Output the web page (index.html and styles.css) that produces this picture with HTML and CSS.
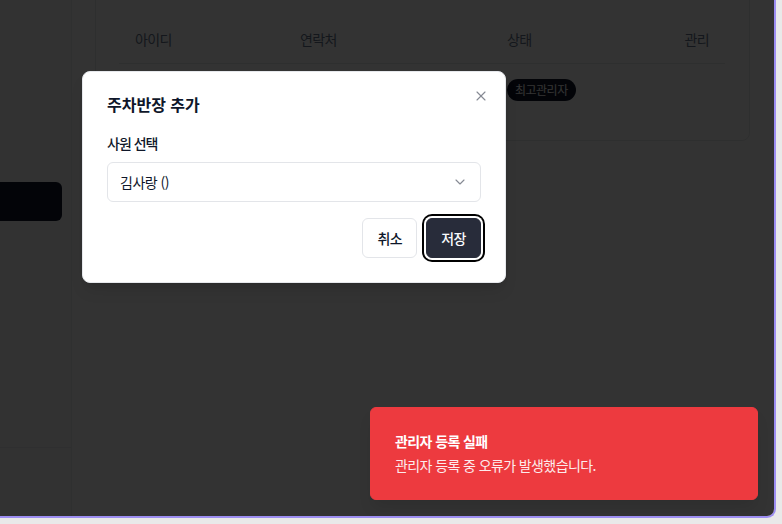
FILE: index.html
```html
<!DOCTYPE html>
<html lang="ko">
<head>
<meta charset="utf-8">
<title>주차반장 추가</title>
<link rel="stylesheet" href="styles.css">
</head>
<body>
<div class="app">
  <aside class="sidebar">
    <nav class="nav">
      <div class="nav-item active"></div>
    </nav>
    <div class="sidebar-footer"></div>
  </aside>
  <main class="main">
    <section class="card">
      <div class="table">
        <div class="row head">
          <span class="cell">아이디</span>
          <span class="cell">연락처</span>
          <span class="cell">상태</span>
          <span class="cell right">관리</span>
        </div>
        <div class="row body">
          <span class="cell"></span>
          <span class="cell"></span>
          <span class="cell"><span class="badge">최고관리자</span></span>
          <span class="cell right"></span>
        </div>
      </div>
    </section>
  </main>

  <div class="overlay"></div>

  <div class="dialog">
    <button class="close" aria-label="닫기">
      <svg width="16" height="16" viewBox="0 0 24 24" fill="none" stroke="currentColor" stroke-width="1.7" stroke-linecap="round" stroke-linejoin="round"><path d="M18 6 6 18"/><path d="m6 6 12 12"/></svg>
    </button>
    <h2 class="dialog-title">주차반장 추가</h2>
    <div class="field">
      <label class="label">사원 선택</label>
      <div class="select">
        <span class="select-value">김사랑 ()</span>
        <svg class="chevron" width="16" height="16" viewBox="0 0 24 24" fill="none" stroke="currentColor" stroke-width="1.7" stroke-linecap="round" stroke-linejoin="round"><path d="m6 9 6 6 6-6"/></svg>
      </div>
    </div>
    <div class="actions">
      <button class="btn outline">취소</button>
      <button class="btn primary">저장</button>
    </div>
  </div>

  <div class="toast">
    <div class="toast-title">관리자 등록 실패</div>
    <div class="toast-desc">관리자 등록 중 오류가 발생했습니다.</div>
  </div>
</div>
</body>
</html>
```

FILE: styles.css
```css
* { box-sizing: border-box; }

html, body {
  margin: 0;
  padding: 0;
}

body {
  background: #e9e9e9;
  font-family: "Noto Sans CJK KR", "Noto Sans", sans-serif;
  color: #0f172a;
  width: 782px;
  height: 524px;
  overflow: hidden;
}

.app {
  position: relative;
  width: 776px;
  height: 518px;
  display: flex;
  background: #ffffff;
  border-right: 2px solid #9d8ef2;
  border-bottom: 2px solid #9d8ef2;
  border-bottom-right-radius: 9px;
  overflow: hidden;
}

/* sidebar */
.sidebar {
  width: 72px;
  flex: none;
  display: flex;
  flex-direction: column;
  background: #fbfbfb;
  border-right: 1px solid #eceef1;
}

.nav {
  flex: 1;
  padding: 182px 9px 0 0;
}

.nav-item {
  height: 39px;
  margin-left: -12px;
  border-radius: 6px;
}

.nav-item.active {
  background: #0f172a;
}

.sidebar-footer {
  height: 69px;
  border-top: 1px solid #e8eaee;
}

/* main */
.main {
  flex: 1;
  padding: 0 24px 0 23px;
}

.card {
  margin-top: -10px;
  border: 1px solid #e6e8ec;
  border-radius: 8px;
  padding: 24px 24px 24px 23px;
}

.row {
  display: grid;
  grid-template-columns: 165px 207px 1fr 120px;
  align-items: center;
}

.row.head {
  height: 49px;
  border-bottom: 1px solid #e6e8ec;
  color: #64748b;
}

.row.body {
  height: 52px;
}

.cell {
  padding: 0 16px;
  font-size: 14px;
  letter-spacing: -0.6px;
  line-height: 20px;
}

.cell.right {
  text-align: right;
}

.badge {
  display: inline-block;
  background: #0f172a;
  color: #ffffff;
  font-size: 12px;
  letter-spacing: -0.5px;
  line-height: 22px;
  height: 22px;
  padding: 0 8px 0 8px;
  border-radius: 999px;
}

/* overlay */
.overlay {
  position: absolute;
  inset: 0;
  background: rgba(0, 0, 0, 0.8);
  z-index: 10;
}

/* dialog */
.dialog {
  position: absolute;
  left: 82px;
  top: 71px;
  width: 424px;
  z-index: 20;
  background: #ffffff;
  border: 1px solid #e6e8ec;
  border-radius: 8px;
  padding: 23px 24px 24px;
  box-shadow: 0 10px 15px -3px rgba(0,0,0,0.1), 0 4px 6px -4px rgba(0,0,0,0.1);
}

.close {
  position: absolute;
  right: 16px;
  top: 16px;
  width: 16px;
  height: 16px;
  padding: 0;
  border: 0;
  background: none;
  color: #0f172a;
  opacity: 0.5;
  display: flex;
}

.dialog-title {
  margin: 0;
  font-size: 16px;
  letter-spacing: 0;
  line-height: 18px;
  font-weight: 600;
  color: #0f172a;
}

.field {
  margin-top: 23px;
  display: flex;
  flex-direction: column;
  gap: 12px;
}

.label {
  font-size: 14px;
  letter-spacing: -1px;
  line-height: 14px;
  font-weight: 500;
  color: #0f172a;
}

.select {
  height: 40px;
  display: flex;
  align-items: center;
  justify-content: space-between;
  padding: 0 12px;
  border: 1px solid #e3e5e9;
  border-radius: 6px;
  background: #ffffff;
}

.select-value {
  font-size: 14px;
  letter-spacing: -0.5px;
  line-height: 20px;
  color: #0f172a;
}

.chevron {
  color: #0f172a;
  opacity: 0.5;
}

.actions {
  margin-top: 16px;
  display: flex;
  justify-content: flex-end;
  gap: 9px;
}

.btn {
  height: 40px;
  padding: 0 14px;
  border-radius: 6px;
  font-family: inherit;
  font-size: 14px;
  letter-spacing: -0.5px;
  font-weight: 500;
  line-height: 20px;
  cursor: pointer;
}

.btn.outline {
  background: #ffffff;
  border: 1px solid #e3e5e9;
  color: #0f172a;
}

.btn.primary {
  background: #282c3a;
  border: 1px solid #282c3a;
  color: #f8fafc;
  box-shadow: 0 0 0 2px #ffffff, 0 0 0 4px #000000;
}

/* toast */
.toast {
  position: absolute;
  right: 16px;
  bottom: 16px;
  width: 388px;
  z-index: 30;
  background: #ed3a3f;
  border: 1px solid #ed3a3f;
  border-radius: 6px;
  padding: 23px 32px 24px 24px;
  color: #ffffff;
  display: flex;
  flex-direction: column;
  gap: 4px;
  box-shadow: 0 10px 15px -3px rgba(0,0,0,0.1);
}

.toast-title {
  font-size: 14px;
  letter-spacing: -0.6px;
  line-height: 20px;
  font-weight: 600;
}

.toast-desc {
  font-size: 14px;
  letter-spacing: -0.6px;
  line-height: 20px;
  opacity: 0.9;
}
```
